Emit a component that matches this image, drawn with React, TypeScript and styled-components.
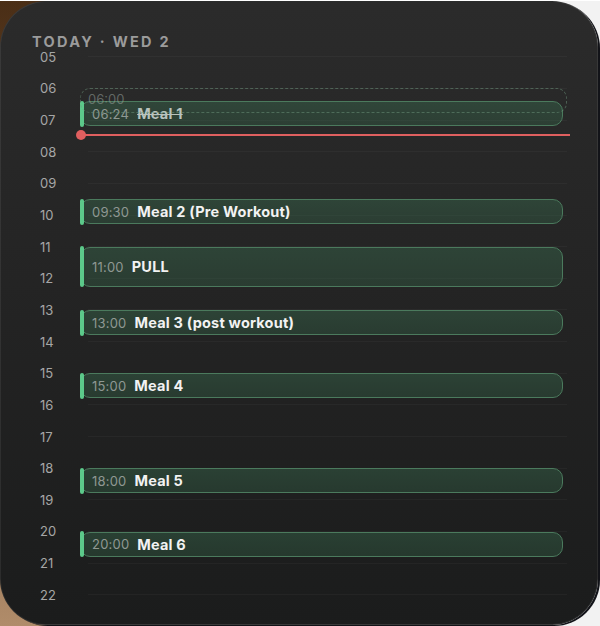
import styled, { createGlobalStyle } from "styled-components";

const HOUR = 31.65;
const START = 5;
const END = 22;

const GlobalStyle = createGlobalStyle`
  html, body {
    margin: 0;
    padding: 0;
    width: 600px;
    height: 626px;
    overflow: hidden;
  }
  body {
    font-family: Inter, "Noto Sans", sans-serif;
  }
`;

const Backdrop = styled.div`
  width: 600px;
  height: 626px;
  background:
    linear-gradient(90deg, transparent 50%, #f2f2f2 50%),
    linear-gradient(180deg, #4a2e16 0%, #7a5636 50%, #b08c6a 100%);
`;

const Card = styled.div`
  box-sizing: border-box;
  width: 598px;
  height: 624px;
  margin-top: 1px;
  border-radius: 46px;
  border: 1px solid rgba(255, 255, 255, 0.07);
  box-shadow: 2px 1px 0 #121318;
  background: linear-gradient(180deg, #2b2b2b 0%, #242424 45%, #1b1c1c 100%);
  padding: 31px 30px 0 31px;
  overflow: hidden;
`;

const Header = styled.div`
  font-size: 14.5px;
  line-height: 18px;
  height: 18px;
  font-weight: 700;
  letter-spacing: 2.3px;
  color: #9b9b9b;
`;

const Timeline = styled.div`
  position: relative;
  margin-top: -10px;
`;

const HourRow = styled.div`
  position: relative;
  display: flex;
  align-items: center;
  height: ${HOUR}px;
`;

const HourLabel = styled.span`
  width: 48px;
  padding-left: 8px;
  font-size: 13px;
  color: #a6a6a6;
`;

const GridLine = styled.div`
  flex: 1;
  height: 1px;
  background: rgba(255, 255, 255, 0.035);
`;

const EventBox = styled.div`
  position: absolute;
  left: 48px;
  right: 4px;
  box-sizing: border-box;
  display: flex;
  align-items: center;
  gap: 8px;
  padding-left: 11px;
  border: 1.5px solid #4b7a5d;
  border-radius: 10px;
  background: linear-gradient(180deg, rgba(58, 110, 80, 0.42), rgba(52, 100, 72, 0.38));
  font-size: 13px;

  &::before {
    content: "";
    position: absolute;
    left: -1.5px;
    top: -1.5px;
    bottom: -1.5px;
    width: 4px;
    border-radius: 3px;
    background: #5cc98a;
  }
`;

const EventTime = styled.span`
  color: #8f9893;
  letter-spacing: 0.2px;
`;

const EventTitle = styled.span<{ $done?: boolean }>`
  color: ${(p) => (p.$done ? "#b9c2bd" : "#f2f2f2")};
  font-size: 14.5px;
  font-weight: 700;
  letter-spacing: 0.2px;
  text-decoration: ${(p) => (p.$done ? "line-through" : "none")};
`;

const GhostBox = styled.div`
  position: absolute;
  left: 48px;
  right: 0;
  box-sizing: border-box;
  height: 25px;
  padding-left: 7px;
  border: 1.5px dashed rgba(110, 150, 125, 0.5);
  border-radius: 10px;
  font-size: 13px;
  line-height: 20px;
  color: rgba(150, 160, 155, 0.55);
  pointer-events: none;
`;

const NowLine = styled.div`
  position: absolute;
  left: 48px;
  right: -3px;
  height: 2px;
  background: #e05f5f;

  &::before {
    content: "";
    position: absolute;
    left: -4px;
    top: -4px;
    width: 10px;
    height: 10px;
    border-radius: 50%;
    background: #e05f5f;
  }
`;

type Ev = { time: string; title: string; height?: number; done?: boolean };

const events: Ev[] = [
  { time: "06:24", title: "Meal 1", done: true },
  { time: "09:30", title: "Meal 2 (Pre Workout)" },
  { time: "11:00", title: "PULL", height: 40 },
  { time: "13:00", title: "Meal 3 (post workout)" },
  { time: "15:00", title: "Meal 4" },
  { time: "18:00", title: "Meal 5" },
  { time: "20:00", title: "Meal 6" },
];

const toY = (t: string) => {
  const [h, m] = t.split(":").map(Number);
  return (h + m / 60 - START) * HOUR + HOUR / 2;
};

const hours = Array.from({ length: END - START + 1 }, (_, i) => START + i);

export default function App() {
  return (
    <Backdrop>
      <GlobalStyle />
      <Card>
        <Header>TODAY · WED 2</Header>
        <Timeline>
          {hours.map((h) => (
            <HourRow key={h}>
              <HourLabel>{String(h).padStart(2, "0")}</HourLabel>
              <GridLine />
            </HourRow>
          ))}
          {events.map((e) => (
            <EventBox
              key={e.time}
              style={{ top: toY(e.time), height: e.height ?? 25 }}
            >
              <EventTime>{e.time}</EventTime>
              <EventTitle $done={e.done}>{e.title}</EventTitle>
            </EventBox>
          ))}
          <GhostBox style={{ top: toY("06:00") }}>06:00</GhostBox>
          <NowLine style={{ top: toY("07:28") - 1 }} />
        </Timeline>
      </Card>
    </Backdrop>
  );
}
